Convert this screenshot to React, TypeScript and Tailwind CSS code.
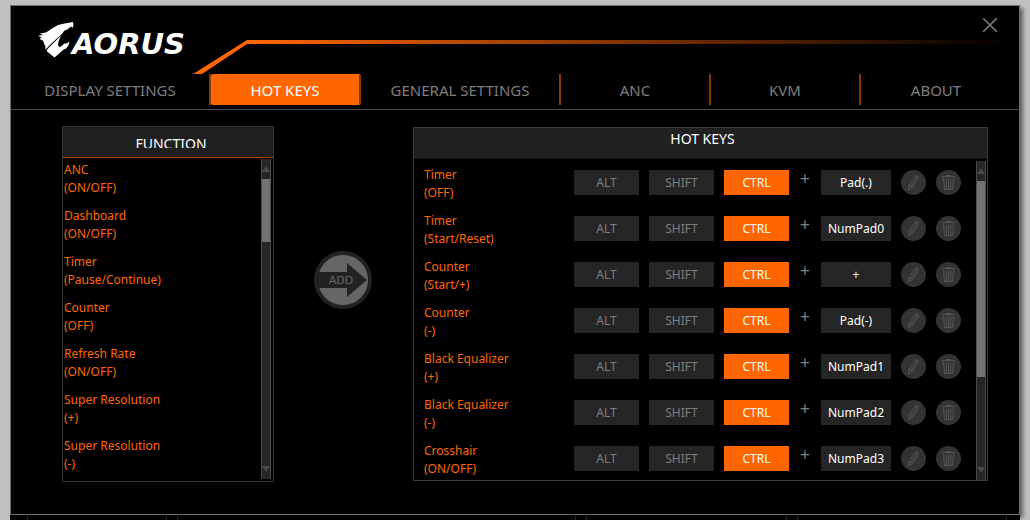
import React, { useState } from 'react';
import clsx from 'clsx';

interface HotKey {
    name: string;
    mode: string;
    key: string;
}

const TABS = [
    { label: 'DISPLAY SETTINGS', wide: true },
    { label: 'HOT KEYS', wide: false },
    { label: 'GENERAL SETTINGS', wide: true },
    { label: 'ANC', wide: false },
    { label: 'KVM', wide: false },
    { label: 'ABOUT', wide: false },
];

const FUNCTIONS = [
    ['ANC', '(ON/OFF)'],
    ['Dashboard', '(ON/OFF)'],
    ['Timer', '(Pause/Continue)'],
    ['Counter', '(OFF)'],
    ['Refresh Rate', '(ON/OFF)'],
    ['Super Resolution', '(+)'],
    ['Super Resolution', '(-)'],
];

const HOT_KEYS: HotKey[] = [
    { name: 'Timer', mode: '(OFF)', key: 'Pad(.)' },
    { name: 'Timer', mode: '(Start/Reset)', key: 'NumPad0' },
    { name: 'Counter', mode: '(Start/+)', key: '+' },
    { name: 'Counter', mode: '(-)', key: 'Pad(-)' },
    { name: 'Black Equalizer', mode: '(+)', key: 'NumPad1' },
    { name: 'Black Equalizer', mode: '(-)', key: 'NumPad2' },
    { name: 'Crosshair', mode: '(ON/OFF)', key: 'NumPad3' },
];

const MODIFIERS = ['ALT', 'SHIFT', 'CTRL'];

const Logo: React.FC = () => (
    <div className="flex items-start">
        <svg viewBox="0 0 38 36" className="w-[38px] h-9" fill="#fff" aria-hidden="true">
            <path d="M35 0 31 .8 26.500 1.600 20 3 14 6.500 8 10.500 2 11.500 5 13 0 13.800 3.500 15.500 1.500 17 5 18.500 6 21.500 7.500 24.500 7 27 8.500 26.500 14 21 21 14.500 24.500 11.500 26 9 30 7 33 4.500 34.500 6 35.500 3Z" />
            <path d="M23 13.500 9 27.500 8.500 29 16.500 35.500 20 32.500 25 28 28 26.500 30.500 23.500 31.500 19.500 28.500 21.500 26 21.500 24.500 23.500 21.500 25 20 23.500 20.500 19.500Z" />
        </svg>
        <span className="-ml-1 pt-1 font-['DejaVu_Sans'] text-[29px] leading-9 font-bold italic text-white">AORUS</span>
    </div>
);

const ScrollBar: React.FC<{ thumb: string }> = ({ thumb }) => (
    <div className="w-[10px] shrink-0 flex flex-col items-center bg-[#262626] border-x border-[#4a4a4a]" aria-hidden="true">
        <div className="h-5 flex items-center">
            <svg viewBox="0 0 8 6" className="w-2 h-[6px]"><path d="M4 0 8 6H0Z" fill="#4a4a4a" /></svg>
        </div>
        <div className={clsx('w-full bg-[#727272]', thumb)} />
        <div className="h-5 mt-auto flex items-center">
            <svg viewBox="0 0 8 6" className="w-2 h-[6px]"><path d="M4 6 0 0H8Z" fill="#4a4a4a" /></svg>
        </div>
    </div>
);

const PencilIcon: React.FC = () => (
    <svg viewBox="0 0 25 25" className="w-full h-full" fill="none" stroke="#555" aria-hidden="true">
        <path d="M14 6.500 17.500 8.500 11.500 17.500 7.500 20 8 15.500Z M8 15.500 11.500 17.500 M15.500 8 10 16.500 M14.500 5.200 18.200 7.400" />
    </svg>
);

const TrashIcon: React.FC = () => (
    <svg viewBox="0 0 25 25" className="w-full h-full" fill="none" stroke="#555" aria-hidden="true">
        <path d="M6 6.500H19 M10.500 6V5.500H14.500V6 M7.500 8 8.500 19.500H16.500L17.500 8 M10 8.500 10.500 19 M12.500 8.500V19 M15 8.500 14.500 19" />
    </svg>
);

const HotKeyRow: React.FC<{ item: HotKey }> = ({ item }) => {
    const [active, setActive] = useState(['CTRL']);

    const toggle = (mod: string) =>
        setActive(active.includes(mod) ? active.filter(m => m !== mod) : [...active, mod]);

    return (
        <li className="flex items-start h-[46px]">
            <div className="flex-1 text-[12px] leading-[18px] text-[#ff6600]">
                <div>{item.name}</div>
                <div>{item.mode}</div>
            </div>
            <div className="flex items-center gap-[10px] pt-1">
                {MODIFIERS.map(mod => (
                    <button
                        key={mod}
                        aria-pressed={active.includes(mod)}
                        onClick={() => toggle(mod)}
                        className={clsx(
                            'w-[65px] h-[25px] text-[12px]',
                            active.includes(mod) ? 'bg-[#ff6600] text-white' : 'bg-[#252525] text-[#7d7d7d]'
                        )}
                    >
                        {mod}
                    </button>
                ))}
                <span className="w-3 h-[25px] text-center text-[18px] leading-4 text-[#7d7d7d]">+</span>
                <input
                    readOnly
                    aria-label={`${item.name} ${item.mode} key`}
                    value={item.key}
                    className="w-[70px] h-[25px] bg-[#252525] text-center text-[12px] text-white outline-none"
                />
                <button aria-label="Edit" className="w-[25px] h-[25px] rounded-full bg-[#333]">
                    <PencilIcon />
                </button>
                <button aria-label="Delete" className="w-[25px] h-[25px] rounded-full bg-[#333]">
                    <TrashIcon />
                </button>
            </div>
        </li>
    );
};

export default function App() {
    const [tab, setTab] = useState('HOT KEYS');

    return (
        <div className="min-h-screen flex flex-col overflow-hidden bg-[#c0c0c0] px-[10px] pt-[5px] font-['Noto_Sans','Open_Sans',sans-serif]">
            <main className="relative bg-black border border-[#6e6e6e] shadow-[3px_3px_4px_rgba(0,0,0,0.5)]">
                <header className="flex h-[68px]">
                    <div className="w-[182px] pl-[27px] pt-4">
                        <Logo />
                    </div>
                    <svg viewBox="0 0 54 34" className="w-[54px] h-[34px] self-end" aria-hidden="true">
                        <path d="M0 34 54 0V4L9 34Z" fill="#ff6600" />
                    </svg>
                    <div className="flex-1 h-1 mt-[34px] mr-2 bg-linear-to-r/srgb from-[#ff6600] to-black" />
                    <button aria-label="Close" className="absolute right-[21px] top-[11px] p-px">
                        <svg viewBox="0 0 14 14" className="w-[14px] h-[14px]" fill="none" stroke="#757575" strokeWidth="1.6">
                            <path d="M0 0 14 14M14 0 0 14" />
                        </svg>
                    </button>
                </header>

                <nav className="flex mr-2 h-[31px] mb-1">
                    {TABS.map((t, i) => (
                        <button
                            key={t.label}
                            onClick={() => setTab(t.label)}
                            className={clsx(
                                'pt-px text-[15px]',
                                t.wide ? 'w-1/5' : 'w-[15%]',
                                i < TABS.length - 1 && 'border-r-2 border-[#8a3800]',
                                tab === t.label ? 'bg-[#ff6600] text-white rounded-xs' : 'text-[#7d7d7d]'
                            )}
                        >
                            {t.label}
                        </button>
                    ))}
                </nav>

                <div className="flex items-start border-t border-[#4a4a4a] pt-4 pb-8 pl-[51px] pr-[31px]">
                    <section className="w-[212px] border border-[#333]">
                        <h2 className="h-[31px] bg-[#202020] border-b border-[#a84a0c] pt-[7px] pl-[6px] text-center text-white text-[14px] leading-5">
                            <span className="block h-[14px] overflow-hidden">FUNCTION</span>
                        </h2>
                        <div className="flex justify-between h-[323px] pl-px pr-[2px] pt-px pb-[2px]">
                            <ul className="pt-[2px] text-[12px] leading-[18px] text-[#ff6600]">
                                {FUNCTIONS.map(([name, mode]) => (
                                    <li key={name + mode} className="h-[46px]">
                                        <button className="block text-left">
                                            {name}
                                            <br />
                                            {mode}
                                        </button>
                                    </li>
                                ))}
                            </ul>
                            <ScrollBar thumb="h-[63px]" />
                        </div>
                    </section>

                    <div className="w-[139px] pt-[125px] pr-[2px] flex justify-center">
                        <button aria-label="Add" className="w-[58px] h-[58px]">
                            <svg viewBox="0 0 58 58" className="w-full h-full">
                                <circle cx="29" cy="29" r="27" fill="#666" stroke="#222" strokeWidth="4" />
                                <path d="M4 21H33V12L53 29 33 46V37H4Z" fill="#222" />
                                <text x="27" y="33" textAnchor="middle" fontSize="11" fill="#666" className="font-['DejaVu_Sans']">ADD</text>
                            </svg>
                        </button>
                    </div>

                    <section className="flex-1 mt-px border border-[#3a3a3a]">
                        <h2 className="h-[31px] bg-[#202020] border-b border-[#1c1208] pl-1 text-center text-white text-[14px] leading-[22px]">
                            HOT KEYS
                        </h2>
                        <div className="flex h-[321px] pl-[10px] pr-px pt-[2px]">
                            <ul className="flex-1 mr-[15px] pt-[5px]">
                                {HOT_KEYS.map(item => (
                                    <HotKeyRow key={item.name + item.mode} item={item} />
                                ))}
                            </ul>
                            <ScrollBar thumb="h-[196px]" />
                        </div>
                    </section>
                </div>
            </main>

            {/* top edge of the panels sitting behind the window */}
            <div className="flex flex-1 bg-black pl-[17px] pr-[13px] gap-[10px]">
                <div className="w-[140px] border-x border-[#333]" />
                <div className="flex-[40] border-x border-[#333]" />
                <div className="flex-[20] border-x border-[#333]" />
                <div className="flex-[21] border-x border-[#333]" />
            </div>
        </div>
    );
}
